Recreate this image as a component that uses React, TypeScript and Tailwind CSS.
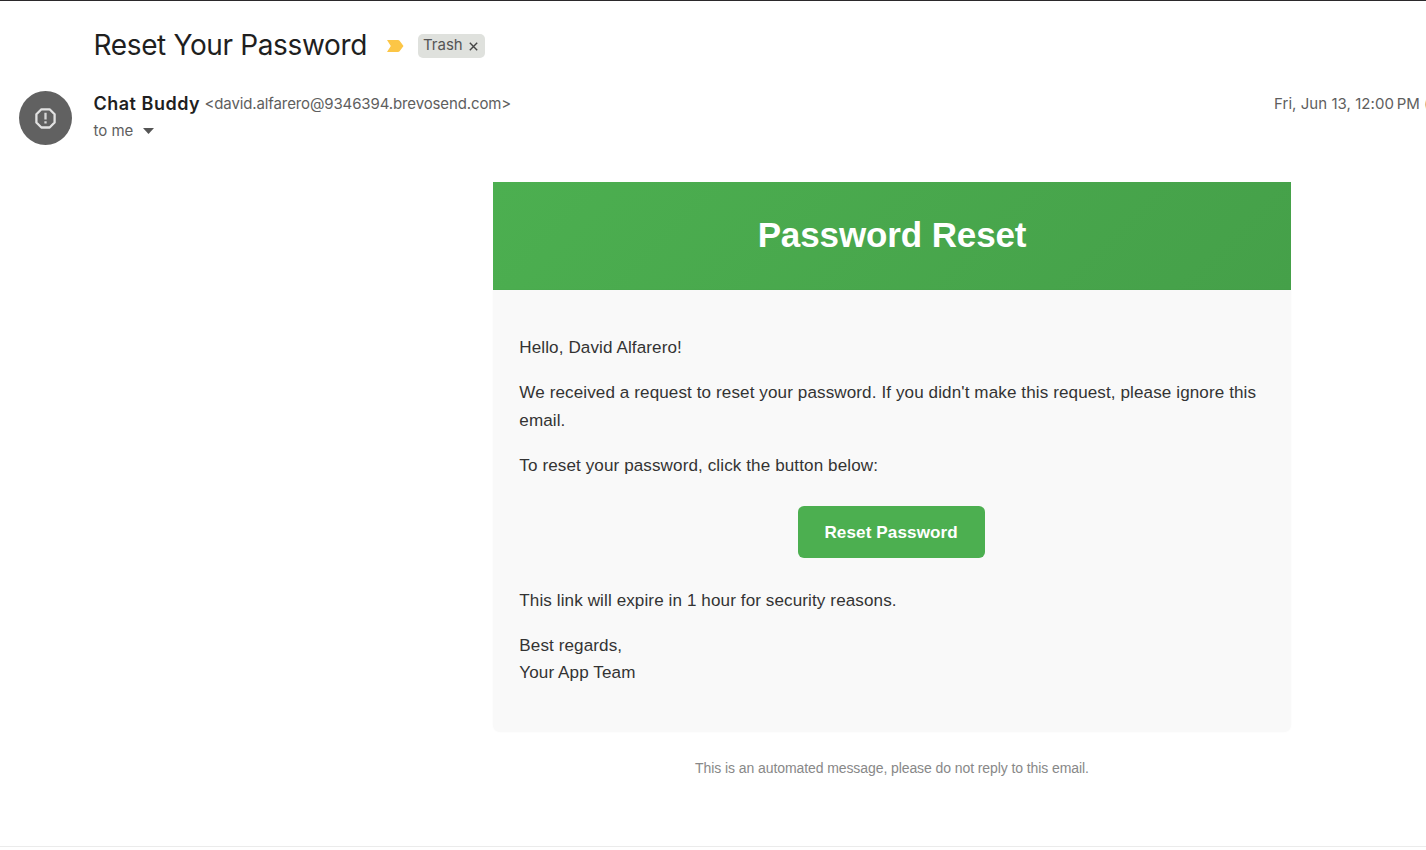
import React from "react";

function SenderAvatar() {
  return (
    <svg className="block h-[54px] w-[53px] shrink-0" viewBox="0 0 53 54" fill="none">
      <ellipse cx="26.5" cy="27" rx="26.5" ry="27" fill="#616161" />
      <path
        d="M22.4 18.3h8.2l5 5v8.2l-5 5h-8.2l-5-5v-8.2z"
        stroke="#e2e2e2"
        strokeWidth="2.3"
        strokeLinejoin="round"
      />
      <path d="M26.5 21.8v6.8M26.5 30.2v2.4" stroke="#d6d6d6" strokeWidth="2.3" />
    </svg>
  );
}

function Subject() {
  return (
    <div className="flex h-[30px] items-center pl-[93.5px]">
      <h1 className="w-[293px] whitespace-nowrap font-['Inter',sans-serif] text-[28px] leading-[30px] tracking-[-0.36px] text-[#1f1f1f]">
        Reset Your Password
      </h1>
      <svg className="mt-0.5 h-3 w-[17px]" viewBox="0 0 17 12">
        <path d="M0 0H11Q12 0 12.6 .8L16.5 6L12.6 11.2Q12 12 11 12H0L3.8 6Z" fill="#fcc646" />
      </svg>
      <div className="ml-[14.5px] mt-0.5 flex h-6 w-[67px] items-center rounded-[5px] bg-[#dfe1dd] pl-[5px] text-[#555]">
        <span className="mb-0.5 w-[46px] whitespace-nowrap font-['Inter',sans-serif] text-[15px] leading-5">Trash</span>
        <svg className="mt-px h-[9px] w-[9px]" viewBox="0 0 9 9" stroke="#444" strokeWidth="1.4">
          <path d="M.8 .8l7.4 7.4M8.2 .8L.8 8.2" />
        </svg>
      </div>
    </div>
  );
}

function Sender() {
  return (
    <div className="mt-[31px] flex h-[54px] pl-[19px] font-['Inter',sans-serif]">
      <SenderAvatar />
      <div className="ml-[21.5px] flex-1">
        <div className="flex h-[26px] items-center whitespace-nowrap">
          <span className="mb-px w-[111px] text-[18px] font-semibold tracking-[0.5px] text-[#1f1f1f]">Chat Buddy</span>
          <span className="text-[15px] tracking-[-0.12px] text-[#5e5e5e]">&lt;david.alfarero@9346394.brevosend.com&gt;</span>
        </div>
        <div className="flex h-7 items-center text-[15px] text-[#5e5e5e]">
          <span className="w-[49px]">to me</span>
          <svg className="h-[6px] w-[11px]" viewBox="0 0 11 6">
            <path d="M0 0H11L5.5 6Z" fill="#555" />
          </svg>
        </div>
      </div>
      <div className="h-[26px] w-[152px] overflow-hidden whitespace-nowrap text-[15px] leading-[26px] tracking-[0.05px] text-[#5e5e5e]">
        <span className="inline-block w-[150px]">Fri, Jun 13, 12:00{"\u202f"}PM</span>
        <span>(</span>
      </div>
    </div>
  );
}

function Message() {
  return (
    <div className="ml-[493px] mt-[37px] w-[798px] font-['Liberation_Sans',Arial,sans-serif] text-[17.07px] leading-[27.5px] tracking-[0.106px] text-[#333]">
      <div className="flex h-[108px] items-center justify-center bg-linear-135 from-[#4caf50] to-[#45a049]">
        <h2 className="mb-[2px] text-[35px] font-bold leading-[54px] tracking-[-0.12px] text-white">Password Reset</h2>
      </div>
      <div className="h-[442px] rounded-b-[7px] bg-[#f9f9f9] pl-[26.3px] pr-[26px] pt-[44px] shadow-[0_0_2px_rgba(0,0,0,0.03)]">
        <p>Hello, David Alfarero!</p>
        <p className="mt-[17.5px]">
          We received a request to reset your password. If you didn't make this request, please ignore this email.
        </p>
        <p className="mt-[17.5px]">To reset your password, click the button below:</p>
        <div className="mt-[27px] flex justify-center pr-[2px]">
          <button className="h-[52px] w-[187px] rounded-[6px] bg-[#4caf50] pt-px font-bold tracking-[0.12px] text-white">
            Reset Password
          </button>
        </div>
        <p className="mt-[28.5px]">This link will expire in 1 hour for security reasons.</p>
        <p className="mt-[17.5px]">
          Best regards,
          <br />
          Your App Team
        </p>
      </div>
      <p className="mt-[25px] text-center text-[14px] leading-[22px] tracking-[-0.085px] text-[#888]">
        This is an automated message, please do not reply to this email.
      </p>
    </div>
  );
}

export default function App() {
  return (
    <main className="flex h-[850px] w-[1426px] flex-col overflow-hidden border-t border-[#2b292b] bg-white">
      <div className="flex h-[846px] flex-col border-b border-[#ebebeb] pt-[29px]">
        <Subject />
        <Sender />
        <Message />
      </div>
    </main>
  );
}
